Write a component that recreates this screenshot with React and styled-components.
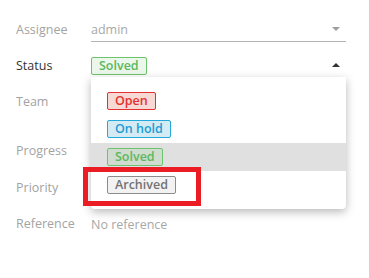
import React from "react";
import styled, { createGlobalStyle } from "styled-components";

const Global = createGlobalStyle`
  html, body { margin: 0; padding: 0; background: #fff; }
  body { font-family: "Open Sans", "Noto Sans", sans-serif; }
`;

const Form = styled.div`
  padding: 12px 0 0 16px;
  width: 330px;
`;

const Row = styled.div`
  display: flex;
  align-items: center;
  height: ${(p) => p.$h || 36}px;
  padding-top: ${(p) => p.$pt || 0}px;
  box-sizing: border-box;
`;

const Label = styled.div`
  width: 75px;
  flex: none;
  font-size: 12.5px;
  line-height: 18px;
  color: ${(p) => (p.$active ? "#333" : "#a3a3a3")};
`;

const Field = styled.div`
  position: relative;
  width: 255px;
  height: 23px;
  box-sizing: border-box;
  display: flex;
  align-items: center;
  border-bottom: ${(p) => (p.$line ? "1px solid #b3b3b3" : "none")};
  font-size: 12.5px;
  color: #a8a8a8;
`;

const Caret = styled.span`
  position: absolute;
  right: 6px;
  top: 50%;
  width: 0;
  height: 0;
  border-left: 4.5px solid transparent;
  border-right: 4.5px solid transparent;
  ${(p) =>
    p.$up
      ? `border-bottom: 4.5px solid #333; margin-top: -2.5px;`
      : `border-top: 4.5px solid #9e9e9e; margin-top: -3px;`}
`;

const colors = {
  open: { b: "#e3312f", bg: "#f6d8d4", c: "#e3312f" },
  hold: { b: "#23a8dc", bg: "#d5ebf3", c: "#1b9cd4" },
  solved: { b: "#6cc46c", bg: "rgba(100,190,100,0.13)", c: "#5cb85c" },
  archived: { b: "#8c8c8c", bg: "#f2f2f2", c: "#727272" },
};

const Badge = styled.span`
  display: inline-block;
  box-sizing: border-box;
  height: 18px;
  line-height: 16px;
  padding: 0 7px;
  font-size: 12.5px;
  font-weight: 600;
  border-radius: 2px;
  border: 1px solid ${(p) => colors[p.$kind].b};
  background: ${(p) => colors[p.$kind].bg};
  color: ${(p) => colors[p.$kind].c};
`;

const Menu = styled.div`
  position: absolute;
  top: 100%;
  left: 0;
  width: 255px;
  padding: 10px 0;
  background: #fff;
  border-radius: 0 0 4px 4px;
  box-shadow: 0 3px 10px rgba(0, 0, 0, 0.28);
  z-index: 5;
`;

const Item = styled.div`
  height: 28px;
  display: flex;
  align-items: center;
  padding-left: 16px;
  background: ${(p) => (p.$selected ? "#e0e0e0" : "transparent")};
`;

const Highlight = styled.div`
  position: absolute;
  left: -8px;
  top: 90px;
  width: 118px;
  height: 39px;
  box-sizing: border-box;
  border: 5px solid #ec1c24;
  pointer-events: none;
`;

const Value = styled.span`
  font-size: 12.5px;
  color: #a8a8a8;
`;

export default function App() {
  return (
    <>
      <Global />
      <Form>
        <Row>
          <Label>Assignee</Label>
          <Field $line>
            <Value>admin</Value>
            <Caret />
          </Field>
        </Row>
        <Row>
          <Label $active>Status</Label>
          <Field $line>
            <Badge $kind="solved">Solved</Badge>
            <Caret $up />
            <Menu>
              <Item>
                <Badge $kind="open">Open</Badge>
              </Item>
              <Item>
                <Badge $kind="hold">On hold</Badge>
              </Item>
              <Item $selected>
                <Badge $kind="solved">Solved</Badge>
              </Item>
              <Item>
                <Badge $kind="archived">Archived</Badge>
              </Item>
              <Highlight />
            </Menu>
          </Field>
        </Row>
        <Row>
          <Label>Team</Label>
          <Field />
        </Row>
        <Row $h={50} $pt={12}>
          <Label>Progress</Label>
          <Field />
        </Row>
        <Row>
          <Label>Priority</Label>
          <Field />
        </Row>
        <Row>
          <Label>Reference</Label>
          <Field>
            <Value>No reference</Value>
          </Field>
        </Row>
      </Form>
    </>
  );
}
